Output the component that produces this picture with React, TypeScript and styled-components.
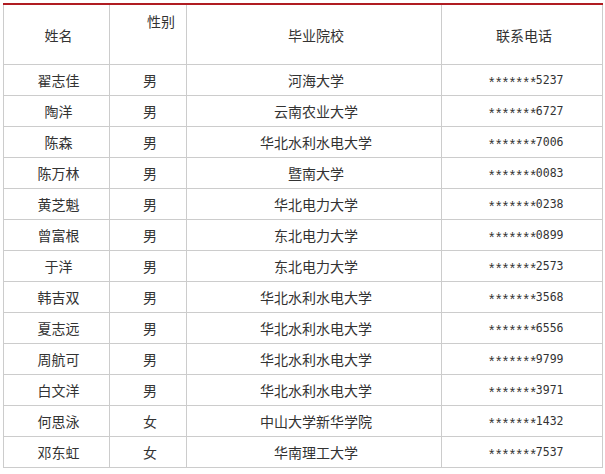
import React from "react";
import styled, { createGlobalStyle } from "styled-components";

interface Graduate {
  name: string;
  gender: string;
  school: string;
  phone: string;
}

const graduates: Graduate[] = [
  { name: "翟志佳", gender: "男", school: "河海大学", phone: "*******5237" },
  { name: "陶洋", gender: "男", school: "云南农业大学", phone: "*******6727" },
  { name: "陈森", gender: "男", school: "华北水利水电大学", phone: "*******7006" },
  { name: "陈万林", gender: "男", school: "暨南大学", phone: "*******0083" },
  { name: "黄芝魁", gender: "男", school: "华北电力大学", phone: "*******0238" },
  { name: "曾富根", gender: "男", school: "东北电力大学", phone: "*******0899" },
  { name: "于洋", gender: "男", school: "东北电力大学", phone: "*******2573" },
  { name: "韩吉双", gender: "男", school: "华北水利水电大学", phone: "*******3568" },
  { name: "夏志远", gender: "男", school: "华北水利水电大学", phone: "*******6556" },
  { name: "周航可", gender: "男", school: "华北水利水电大学", phone: "*******9799" },
  { name: "白文洋", gender: "男", school: "华北水利水电大学", phone: "*******3971" },
  { name: "何思泳", gender: "女", school: "中山大学新华学院", phone: "*******1432" },
  { name: "邓东虹", gender: "女", school: "华南理工大学", phone: "*******7537" },
];

const GlobalStyle = createGlobalStyle`
  body {
    margin: 0;
    background: #ffffff;
    font-family: "Noto Sans CJK SC", "Liberation Sans", sans-serif;
  }
`;

const Page = styled.div`
  padding: 3px 0 0 3px;
`;

const Table = styled.table`
  width: 600px;
  table-layout: fixed;
  border-collapse: separate;
  border-spacing: 0;
  border-top: 2px solid #b01c22;
  color: #333333;
  font-size: 14px;
`;

const HeadCell = styled.th<{ $top?: boolean }>`
  box-sizing: border-box;
  height: 60px;
  padding: ${(p) => (p.$top ? "6px 0 0 26px" : "0 0 0 4px")};
  border-right: 1px solid #cccccc;
  border-bottom: 1px solid #cccccc;
  font-weight: normal;
  text-align: center;
  vertical-align: ${(p) => (p.$top ? "top" : "middle")};
  line-height: 20px;
  &:first-child {
    border-left: 1px solid #cccccc;
  }
`;

const Cell = styled.td<{ $mono?: boolean }>`
  box-sizing: border-box;
  height: 31px;
  padding: 0 0 0 ${(p) => (p.$mono ? "7px" : "4px")};
  border-right: 1px solid #cccccc;
  border-bottom: 1px solid #cccccc;
  text-align: center;
  vertical-align: middle;
  line-height: 20px;
  white-space: nowrap;
  font-family: ${(p) =>
    p.$mono ? '"DejaVu Sans Mono", "Liberation Mono", monospace' : "inherit"};
  font-size: ${(p) => (p.$mono ? "11.5px" : "14px")};
  &:first-child {
    border-left: 1px solid #cccccc;
  }
`;

// the masked part of the number: bigger, centred asterisks
const Mask = styled.span`
  font-family: "Liberation Mono", monospace;
  font-size: 14px;
  letter-spacing: -1.5px;
  vertical-align: -4px;
  line-height: 0;
`;

const Phone: React.FC<{ value: string }> = ({ value }) => {
  const stars = value.match(/^\*+/)?.[0] ?? "";
  return (
    <>
      <Mask>{stars}</Mask>
      {value.slice(stars.length)}
    </>
  );
};

export default function App() {
  return (
    <Page>
      <GlobalStyle />
      <Table>
        <colgroup>
          <col style={{ width: 107 }} />
          <col style={{ width: 77 }} />
          <col style={{ width: 255 }} />
          <col style={{ width: 161 }} />
        </colgroup>
        <thead>
          <tr>
            <HeadCell>姓名</HeadCell>
            <HeadCell $top>性别</HeadCell>
            <HeadCell>毕业院校</HeadCell>
            <HeadCell>联系电话</HeadCell>
          </tr>
        </thead>
        <tbody>
          {graduates.map((g) => (
            <tr key={g.name}>
              <Cell>{g.name}</Cell>
              <Cell>{g.gender}</Cell>
              <Cell>{g.school}</Cell>
              <Cell $mono>
                <Phone value={g.phone} />
              </Cell>
            </tr>
          ))}
        </tbody>
      </Table>
    </Page>
  );
}
